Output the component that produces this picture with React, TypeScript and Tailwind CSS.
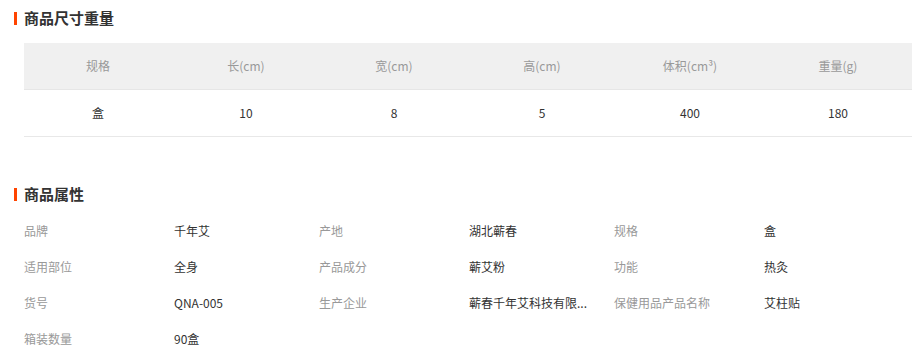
import React from "react";

const font = { fontFamily: '"Microsoft YaHei", "Noto Sans CJK SC", "Noto Sans", sans-serif' };

function Title({ text }: { text: string }) {
  return (
    <div className="flex items-center h-[20px] pl-[14px]">
      <span className="w-[3px] h-[13px] bg-[#ff4400]" />
      <span className="ml-[7px] text-[15px] font-bold text-[#333] leading-[20px]">{text}</span>
    </div>
  );
}

const headers = ["规格", "长(cm)", "宽(cm)", "高(cm)", "体积(cm³)", "重量(g)"];
const values = ["盒", "10", "8", "5", "400", "180"];

const props: [string, string][][] = [
  [["品牌", "千年艾"], ["产地", "湖北蕲春"], ["规格", "盒"]],
  [["适用部位", "全身"], ["产品成分", "蕲艾粉"], ["功能", "热灸"]],
  [["货号", "QNA-005"], ["生产企业", "蕲春千年艾科技有限..."], ["保健用品产品名称", "艾柱贴"]],
  [["箱装数量", "90盒"]],
];

export default function App() {
  return (
    <div className="w-[921px] h-[352px] bg-white overflow-hidden pt-[8px]" style={font}>
      <Title text="商品尺寸重量" />
      <div className="ml-[24px] w-[888px] mt-[15px]">
        <div className="grid grid-cols-6 h-[47px] items-center bg-[#f0f0f0] border-b border-[#e6e6e6] text-[12px] text-[#999]">
          {headers.map((h) => (
            <div key={h} className="text-center">{h}</div>
          ))}
        </div>
        <div className="grid grid-cols-6 h-[47px] items-center border-b border-[#e8e8e8] text-[12px] text-[#333]">
          {values.map((v, i) => (
            <div key={i} className="text-center">{v}</div>
          ))}
        </div>
      </div>
      <div className="mt-[47px]">
        <Title text="商品属性" />
      </div>
      <div className="pl-[24px] mt-[9px]">
        {props.map((row, ri) => (
          <div key={ri} className="flex h-[36px] items-center text-[12px]">
            {row.map(([k, v]) => (
              <div key={k} className="flex w-[295px]">
                <div className="w-[150px] text-[#999]">{k}</div>
                <div className="w-[140px] text-[#333] whitespace-nowrap">{v}</div>
              </div>
            ))}
          </div>
        ))}
      </div>
    </div>
  );
}
